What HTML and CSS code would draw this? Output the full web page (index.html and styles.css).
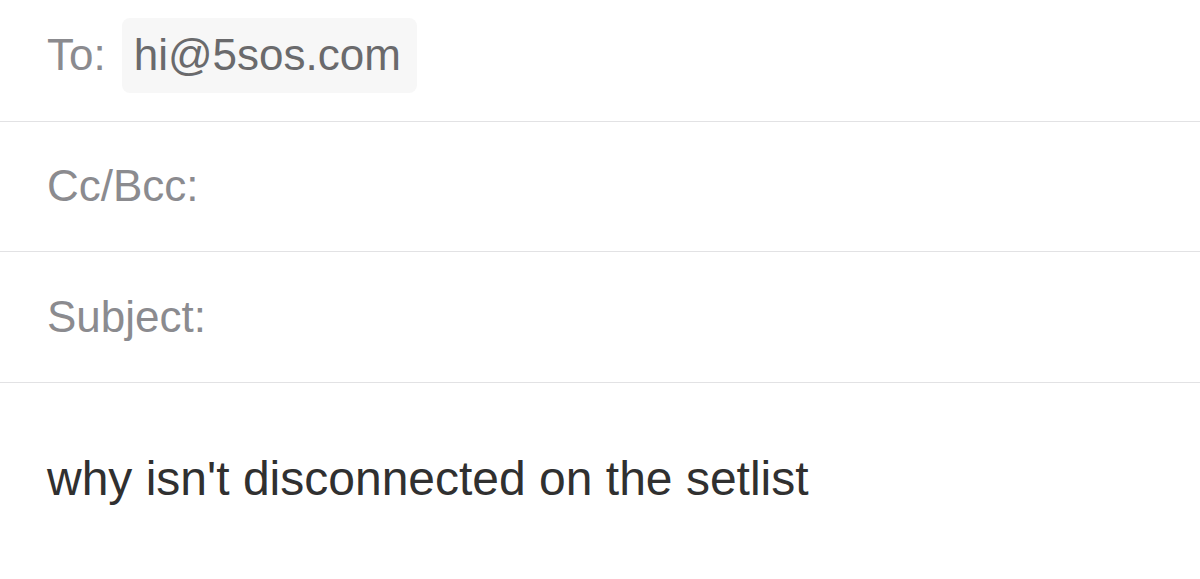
FILE: index.html
```html
<!DOCTYPE html>
<html>
<head>
<meta charset="utf-8">
<link rel="stylesheet" href="styles.css">
</head>
<body>
<div class="compose">
  <div class="field field-to">
    <span class="label">To:</span>
    <span class="recipient">hi@5sos.com</span>
  </div>
  <div class="field field-cc">
    <span class="label">Cc/Bcc:</span>
  </div>
  <div class="field field-subject">
    <span class="label">Subject:</span>
  </div>
  <div class="body-text">why isn't disconnected on the setlist</div>
</div>
</body>
</html>
```

FILE: styles.css
```css
html, body {
  margin: 0;
  padding: 0;
  background: #ffffff;
}

body {
  font-family: "Liberation Sans", Arial, sans-serif;
  width: 1200px;
  height: 579px;
  overflow: hidden;
}

.compose {
  display: flex;
  flex-direction: column;
}

.field {
  display: flex;
  align-items: center;
  padding-left: 47px;
  border-bottom: 1px solid #e2e2e4;
  box-sizing: border-box;
  font-size: 44px;
  line-height: 1.15;
}

.field-to {
  height: 122px;
  padding-bottom: 10px;
  gap: 16px;
}

.field-cc {
  height: 130px;
}

.field-subject {
  height: 131px;
}

.label {
  color: #8b8b8f;
}

.recipient {
  display: flex;
  align-items: center;
  height: 75px;
  padding: 0 16px 0 12px;
  background: #f7f7f7;
  border-radius: 8px;
  color: #6a6a6c;
}

.body-text {
  padding: 68px 0 0 47px;
  font-size: 48px;
  line-height: 1.15;
  color: #303030;
}
```
